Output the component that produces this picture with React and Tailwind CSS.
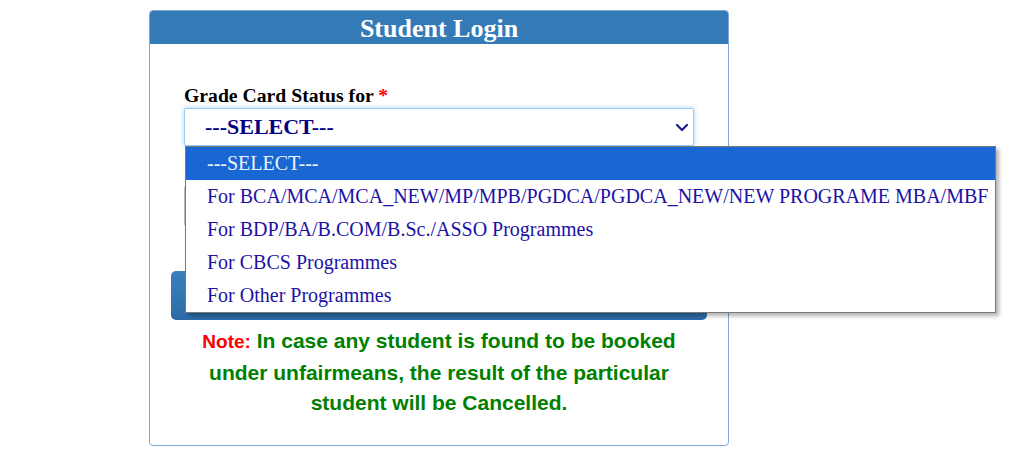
import React from "react";

const options = [
  "---SELECT---",
  "For BCA/MCA/MCA_NEW/MP/MPB/PGDCA/PGDCA_NEW/NEW PROGRAME MBA/MBF",
  "For BDP/BA/B.COM/B.Sc./ASSO Programmes",
  "For CBCS Programmes",
  "For Other Programmes",
];

export default function App() {
  return (
    <div className="min-h-[459px] bg-white pt-[10px]">
      <div className="ml-[149px] w-[580px] rounded-[4px] border border-[#7eaad8] bg-white">
        {/* header */}
        <div className="h-[33px] rounded-t-[3px] bg-[#337ab7] pt-[3px] text-center font-['Liberation_Serif',serif] text-[26px] font-bold leading-[30px] text-white">
          Student Login
        </div>

        <div className="px-[21px] pb-[26px] pt-[40px]">
          <div className="px-[13px]">
            <label className="mb-[2px] block font-['Liberation_Serif',serif] text-[19.7px] font-bold leading-[22px] text-black">
              Grade Card Status for <span className="text-[#ff0000]">*</span>
            </label>

            <div className="relative">
              <div className="flex h-[38px] w-[510px] items-center justify-between rounded-[2px] border border-[#9ecaed] bg-white pl-[20px] pr-[4px] shadow-[0_0_5px_#a9d0f2]">
                <span className="font-['Liberation_Serif',serif] text-[22px] font-bold leading-none text-[#000080]">
                  ---SELECT---
                </span>
                <svg width="14" height="9" viewBox="0 0 14 9" fill="none">
                  <path d="M2 2l5 5 5-5" stroke="#1a1a8c" strokeWidth="2.2" strokeLinecap="round" strokeLinejoin="round" />
                </svg>
              </div>

              {/* open dropdown list */}
              <div className="absolute left-[1px] top-full z-10 w-[811px] border border-[#7a7a7a] bg-white shadow-[3px_3px_4px_rgba(0,0,0,0.3)]">
                {options.map((o, i) => (
                  <div
                    key={o}
                    className={
                      i === 0
                        ? "h-[33px] bg-[#1967d2] pl-[21px] font-['Liberation_Serif',serif] text-[20px] leading-[33px] text-[#eef3fc]"
                        : "h-[33px] pl-[21px] font-['Liberation_Serif',serif] text-[20px] leading-[33px] text-[#1c12a6]"
                    }
                  >
                    {o}
                  </div>
                ))}
              </div>
            </div>

            <div className="mt-[40px] h-[40px] w-[510px] rounded-[2px] border border-[#bbbbbb] bg-white"></div>
          </div>

          <button className="mt-[45px] block h-[49px] w-[536px] rounded-[5px] bg-gradient-to-b from-[#3a80bd] to-[#2c6ca6] font-['Liberation_Serif',serif] text-[20px] font-bold text-white">
            Submit
          </button>

          <p className="mx-auto mt-[6px] w-[500px] text-center font-['Liberation_Sans',Arial,sans-serif] text-[21px] font-bold leading-[30.5px] text-[#008000]">
            <span className="text-[19px] leading-[30.5px] text-[#ff0000]">Note:</span> In case any student is found to be booked under unfairmeans, the result of the particular student will be Cancelled.
          </p>
        </div>
      </div>
    </div>
  );
}
